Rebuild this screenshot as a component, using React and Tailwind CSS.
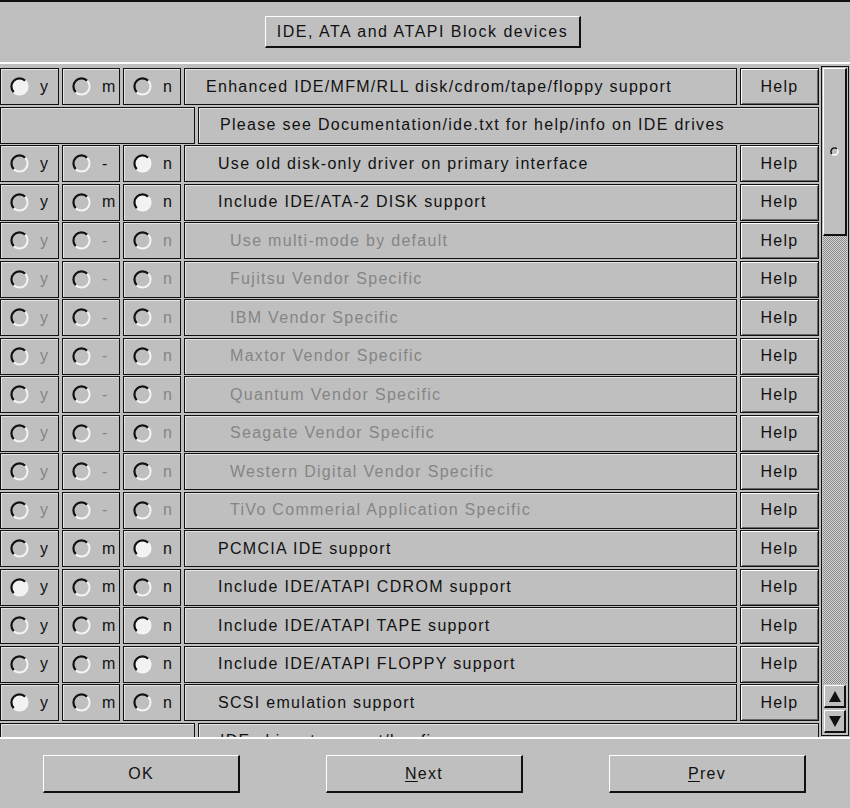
import React from "react";

const rows = [
    { sel: "y", mid: "m", label: "Enhanced IDE/MFM/RLL disk/cdrom/tape/floppy support", indent: 0 },
    { note: true, label: "Please see Documentation/ide.txt for help/info on IDE drives" },
    { sel: "n", mid: "-", label: "Use old disk-only driver on primary interface", indent: 1 },
    { sel: "n", mid: "m", label: "Include IDE/ATA-2 DISK support", indent: 1 },
    { sel: null, mid: "-", label: "Use multi-mode by default", indent: 2, off: true },
    { sel: null, mid: "-", label: "Fujitsu Vendor Specific", indent: 2, off: true },
    { sel: null, mid: "-", label: "IBM Vendor Specific", indent: 2, off: true },
    { sel: null, mid: "-", label: "Maxtor Vendor Specific", indent: 2, off: true },
    { sel: null, mid: "-", label: "Quantum Vendor Specific", indent: 2, off: true },
    { sel: null, mid: "-", label: "Seagate Vendor Specific", indent: 2, off: true },
    { sel: null, mid: "-", label: "Western Digital Vendor Specific", indent: 2, off: true },
    { sel: null, mid: "-", label: "TiVo Commerial Application Specific", indent: 2, off: true },
    { sel: "n", mid: "m", label: "PCMCIA IDE support", indent: 1 },
    { sel: "y", mid: "m", label: "Include IDE/ATAPI CDROM support", indent: 1 },
    { sel: "n", mid: "m", label: "Include IDE/ATAPI TAPE support", indent: 1 },
    { sel: "n", mid: "m", label: "Include IDE/ATAPI FLOPPY support", indent: 1 },
    { sel: "y", mid: "m", label: "SCSI emulation support", indent: 1 },
    { note: true, label: "IDE chipset support/bugfixes" },
];

const cell = "h-full border border-[#111] bg-[#bfbfbf] shadow-[inset_1px_1px_0_#e4e4e4]";
const raised = "border-t border-l border-t-white border-l-white border-r-2 border-b-2 border-r-[#111] border-b-[#111] bg-[#bfbfbf]";

const Radio = ({ on }) => (
    <svg width="21" height="21" viewBox="0 0 21 21" className="shrink-0">
        <circle cx="10.5" cy="10.5" r="8" fill={on ? "#f2f2f2" : "none"} />
        <path d="M16.2 4.8 A8 8 0 0 0 4.8 16.2" fill="none" stroke="#111" strokeWidth="2.2" />
        <path d="M4.8 16.2 A8 8 0 0 0 16.2 4.8" fill="none" stroke="#f4f4f4" strokeWidth="2" />
    </svg>
);

const Toggle = ({ on, letter, off, width }) => (
    <div className={`${cell} ${width} flex items-center pl-[8px]`}>
        <Radio on={on} />
        <span className={`ml-[10px] ${off ? "text-[#858585]" : "text-[#111]"}`}>{letter}</span>
    </div>
);

const Row = ({ row }) => {
    if (row.note) {
        return (
            <div className="flex gap-[3px] h-[37px] shrink-0">
                <div className={`${cell} w-[195px]`} />
                <div className={`${cell} flex-1 flex items-center pl-[21px]`}>{row.label}</div>
            </div>
        );
    }
    const pad = row.indent === 0 ? "pl-[21px]" : row.indent === 1 ? "pl-[33px]" : "pl-[45px]";
    return (
        <div className="flex gap-[3px] h-[37px] shrink-0">
            <Toggle width="w-[59px]" on={row.sel === "y"} letter="y" off={row.off} />
            <Toggle width="w-[58px]" on={row.sel === "m"} letter={row.mid} off={row.off} />
            <Toggle width="w-[58px]" on={row.sel === "n"} letter="n" off={row.off} />
            <div className={`${cell} w-[553px] flex items-center ${pad} ${row.off ? "text-[#858585]" : "text-[#111]"}`}>
                {row.label}
            </div>
            <div className="h-full w-[79px] border border-[#111] bg-[#bfbfbf] shadow-[inset_1px_1px_0_#fff,inset_-1px_-1px_0_#666] flex items-center justify-center">
                Help
            </div>
        </div>
    );
};

const Scrollbar = () => (
    <div className="ml-[2px] mt-[2px] w-[28px] h-[670px] border border-[#111] flex flex-col p-[1px] bg-[#bfbfbf]">
        <div className={`${raised} h-[168px] shrink-0 flex items-center justify-center`}>
            <svg width="9" height="9" viewBox="0 0 9 9">
                <path d="M7 2 A3.5 3.5 0 0 0 2 7" fill="none" stroke="#111" strokeWidth="1.6" />
                <path d="M2 7 A3.5 3.5 0 0 0 7 2" fill="none" stroke="#fff" strokeWidth="1.6" />
            </svg>
        </div>
        <div className="flex-1 bg-[repeating-conic-gradient(#8a8a8a_0%_25%,#d4d4d4_0%_50%)] bg-[length:2px_2px]" />
        <div className="h-[50px] shrink-0 flex flex-col gap-[2px] pt-[1px] px-[1px]">
            <div className={`${raised} h-[23px] flex items-center justify-center`}>
                <svg width="14" height="13" viewBox="0 0 14 13"><path d="M7 1 L13 12 L1 12 Z" fill="#111" /></svg>
            </div>
            <div className={`${raised} h-[23px] flex items-center justify-center`}>
                <svg width="14" height="13" viewBox="0 0 14 13"><path d="M1 1 L13 1 L7 12 Z" fill="#111" /></svg>
            </div>
        </div>
    </div>
);

const App = () => {
    return (
        <div className="w-[850px] h-[808px] bg-[#bfbfbf] flex flex-col overflow-hidden text-[16px] tracking-[1.3px] text-[#111] font-['Liberation_Sans',Arial,sans-serif]">
            <div className="h-[62px] shrink-0 border-t-2 border-[#111] pt-[14px]">
                <div className={`${raised} ml-[265px] w-[316px] h-[32px] flex items-center justify-center tracking-[1.5px]`}>
                    IDE, ATA and ATAPI Block devices
                </div>
            </div>
            <div className="h-[675px] shrink-0 border-t-2 border-white flex overflow-hidden">
                <div className="w-[819px] pt-[4px] flex flex-col gap-[1.5px] overflow-hidden">
                    {rows.map((row, i) => (
                        <Row key={i} row={row} />
                    ))}
                </div>
                <Scrollbar />
            </div>
            <div className="flex-1 border-t-2 border-white pt-[16px] pl-[43px] flex items-start gap-[86px]">
                <button className={`${raised} w-[197px] h-[38px]`}>OK</button>
                <button className={`${raised} w-[197px] h-[38px]`}>
                    <span className="underline underline-offset-2">N</span>ext
                </button>
                <button className={`${raised} w-[197px] h-[38px]`}>
                    <span className="underline underline-offset-2">P</span>rev
                </button>
            </div>
        </div>
    );
};

export default App;
